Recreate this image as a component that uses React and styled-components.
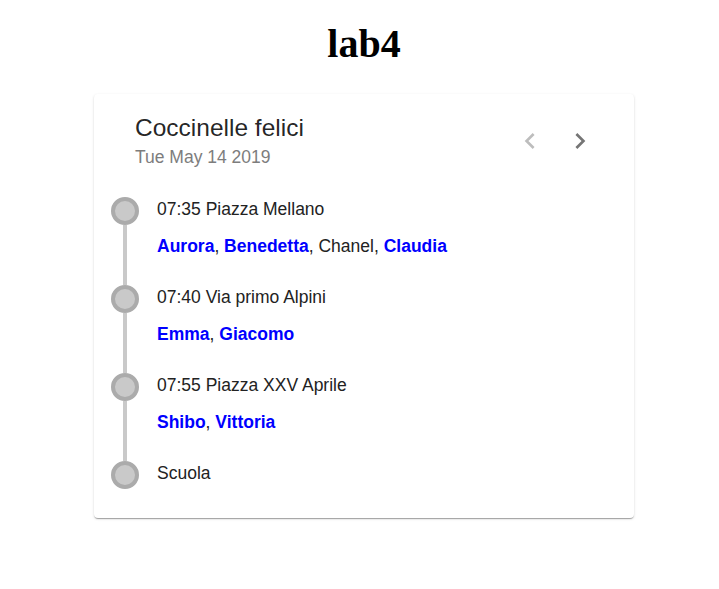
import React from "react";
import styled, { createGlobalStyle } from "styled-components";

const stops = [
  {
    label: "07:35 Piazza Mellano",
    kids: [
      { name: "Aurora", present: true },
      { name: "Benedetta", present: true },
      { name: "Chanel", present: false },
      { name: "Claudia", present: true },
    ],
  },
  {
    label: "07:40 Via primo Alpini",
    kids: [
      { name: "Emma", present: true },
      { name: "Giacomo", present: true },
    ],
  },
  {
    label: "07:55 Piazza XXV Aprile",
    kids: [
      { name: "Shibo", present: true },
      { name: "Vittoria", present: true },
    ],
  },
  { label: "Scuola", kids: [] },
];

const Global = createGlobalStyle`
  body {
    margin: 0;
    background: #fff;
  }
`;

const Page = styled.div`
  padding: 21px 8px 8px 17px;
  font-family: "Liberation Sans", Arial, sans-serif;
`;

const Heading = styled.h1`
  font-family: "Liberation Serif", "Times New Roman", serif;
  font-size: 40px;
  line-height: 46px;
  font-weight: bold;
  text-align: center;
  margin: 0 0 27px;
`;

const Card = styled.div`
  width: 540px;
  margin: 0 auto;
  background: #fff;
  border-radius: 4px;
  box-shadow: 0px 2px 1px -1px rgba(0, 0, 0, 0.2),
    0px 1px 1px 0px rgba(0, 0, 0, 0.14), 0px 1px 3px 0px rgba(0, 0, 0, 0.12);
  padding: 20px 30px 29px 17px;
  box-sizing: border-box;
`;

const Header = styled.div`
  display: flex;
  justify-content: space-between;
  align-items: flex-start;
  padding-left: 24px;
`;

const Titles = styled.div`
  display: flex;
  flex-direction: column;
  gap: 5px;
`;

const Title = styled.div`
  font-size: 24.5px;
  line-height: 28px;
  color: rgba(0, 0, 0, 0.87);
`;

const Subtitle = styled.div`
  font-size: 17.5px;
  line-height: 20px;
  color: #7d7d7d;
`;

const Actions = styled.div`
  display: flex;
  gap: 2px;
  margin-top: 3px;
`;

const NavButton = styled.button`
  width: 48px;
  height: 48px;
  border: none;
  background: transparent;
  padding: 0;
  display: flex;
  align-items: center;
  justify-content: center;
  color: ${(p) => (p.disabled ? "#bdbdbd" : "#757575")};
  cursor: ${(p) => (p.disabled ? "default" : "pointer")};
`;

const Timeline = styled.div`
  margin-top: 30px;
  display: flex;
  flex-direction: column;
`;

const Item = styled.div`
  display: flex;
  gap: 18px;
`;

const Rail = styled.div`
  width: 28px;
  display: flex;
  flex-direction: column;
  align-items: center;
  flex-shrink: 0;
`;

const Dot = styled.div`
  width: 28px;
  height: 28px;
  box-sizing: border-box;
  border-radius: 50%;
  border: 4px solid #ababab;
  background: #c9c9c9;
  flex-shrink: 0;
`;

const Connector = styled.div`
  flex: 1;
  width: 4px;
  background: #c9c9c9;
`;

const Content = styled.div`
  padding-top: 0;
  padding-bottom: ${(p) => (p.last ? "0" : "27px")};
`;

const StopName = styled.div`
  font-size: 17.5px;
  line-height: 24px;
  color: #222;
`;

const Kids = styled.div`
  margin-top: 13px;
  font-size: 17.5px;
  line-height: 24px;
  color: #222;
`;

const Kid = styled.span`
  font-weight: ${(p) => (p.present ? "bold" : "normal")};
  color: ${(p) => (p.present ? "#0000ff" : "#222")};
`;

const Chevron = ({ dir }) => (
  <svg width="32" height="32" viewBox="0 0 24 24" fill="currentColor">
    {dir === "left" ? (
      <path d="M15.41 7.41L14 6l-6 6 6 6 1.41-1.41L10.83 12z" />
    ) : (
      <path d="M10 6L8.59 7.41 13.17 12l-4.58 4.59L10 18l6-6z" />
    )}
  </svg>
);

export default function App() {
  return (
    <Page>
      <Global />
      <Heading>lab4</Heading>
      <Card>
        <Header>
          <Titles>
            <Title>Coccinelle felici</Title>
            <Subtitle>Tue May 14 2019</Subtitle>
          </Titles>
          <Actions>
            <NavButton disabled>
              <Chevron dir="left" />
            </NavButton>
            <NavButton>
              <Chevron dir="right" />
            </NavButton>
          </Actions>
        </Header>
        <Timeline>
          {stops.map((stop, i) => {
            const last = i === stops.length - 1;
            return (
              <Item key={stop.label}>
                <Rail>
                  <Dot />
                  {!last && <Connector />}
                </Rail>
                <Content last={last}>
                  <StopName>{stop.label}</StopName>
                  {stop.kids.length > 0 && (
                    <Kids>
                      {stop.kids.map((k, j) => (
                        <React.Fragment key={k.name}>
                          <Kid present={k.present}>{k.name}</Kid>
                          {j < stop.kids.length - 1 && ", "}
                        </React.Fragment>
                      ))}
                    </Kids>
                  )}
                </Content>
              </Item>
            );
          })}
        </Timeline>
      </Card>
    </Page>
  );
}
